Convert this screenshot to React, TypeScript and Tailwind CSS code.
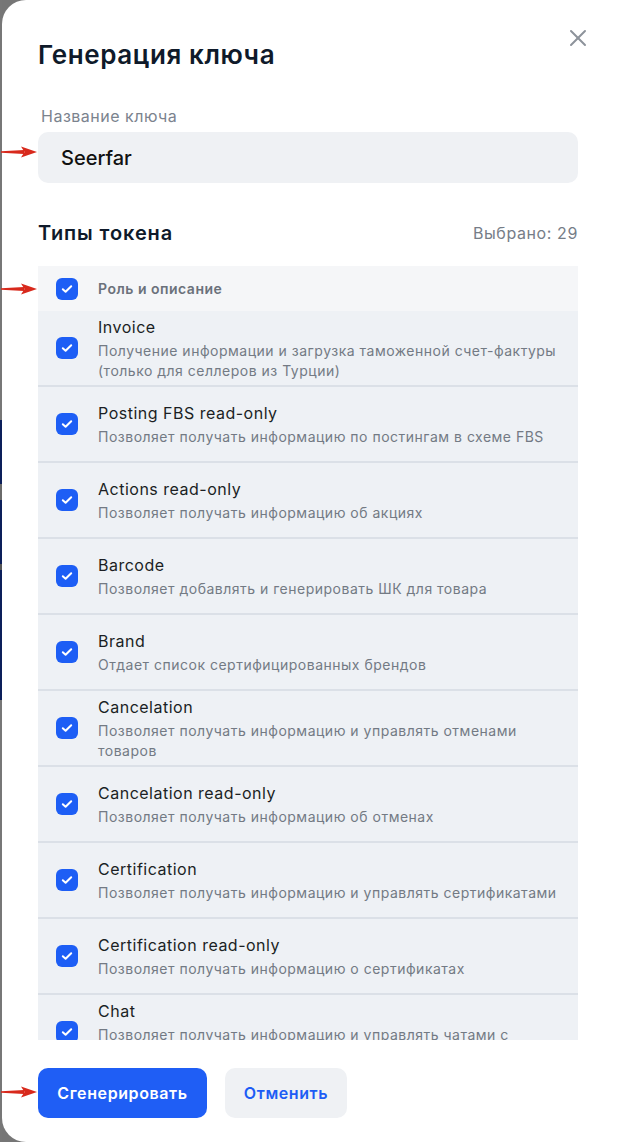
import { X } from 'lucide-react';

const tokens = [
  { title: 'Invoice', desc: 'Получение информации и загрузка таможенной счет-фактуры (только для селлеров из Турции)' },
  { title: 'Posting FBS read-only', desc: 'Позволяет получать информацию по постингам в схеме FBS' },
  { title: 'Actions read-only', desc: 'Позволяет получать информацию об акциях' },
  { title: 'Barcode', desc: 'Позволяет добавлять и генерировать ШК для товара' },
  { title: 'Brand', desc: 'Отдает список сертифицированных брендов' },
  { title: 'Cancelation', desc: 'Позволяет получать информацию и управлять отменами товаров' },
  { title: 'Cancelation read-only', desc: 'Позволяет получать информацию об отменах' },
  { title: 'Certification', desc: 'Позволяет получать информацию и управлять сертификатами' },
  { title: 'Certification read-only', desc: 'Позволяет получать информацию о сертификатах' },
  { title: 'Chat', desc: 'Позволяет получать информацию и управлять чатами с покупателями' },
];

function Check() {
  return (
    <div className="w-[22px] h-[22px] shrink-0 rounded-[6px] bg-[#1d5ef5] flex items-center justify-center">
      <svg width="12" height="10" viewBox="0 0 12 10" fill="none">
        <path d="M1.8 5.2 L4.6 7.8 L10.2 2.2" stroke="white" strokeWidth="2" strokeLinecap="round" strokeLinejoin="round" />
      </svg>
    </div>
  );
}

function Arrow({ top }: { top: number }) {
  return (
    <svg className="absolute left-[1px]" style={{ top }} width="36" height="12" viewBox="0 0 36 12">
      <polygon points="0,5.3 23,4 23,8 0,6.7" fill="#d8291c" />
      <polygon points="20,0.5 36,6 20,11.5 23.5,6" fill="#d8291c" />
    </svg>
  );
}

export default function App() {
  return (
    <div className="relative w-[620px] h-[1142px] flex bg-[#767676] overflow-hidden tracking-[0.5px]" style={{ fontFamily: 'Inter, "Noto Sans", sans-serif' }}>
      <div className="w-[2px] flex flex-col shrink-0">
        <div className="h-[420px] bg-[#777777]" />
        <div className="h-[64px] bg-[#0c1f5a]" />
        <div className="h-[16px] bg-[#6a6a6a]" />
        <div className="h-[64px] bg-[#0c1f5a]" />
        <div className="h-[6px] bg-[#555]" />
        <div className="h-[130px] bg-[#0c1f5a]" />
        <div className="flex-1 bg-[#777777]" />
      </div>

      <div className="flex-1 bg-white rounded-l-[24px] pl-[36px] pr-[42px] flex flex-col">
        <div className="flex justify-between items-start pt-[31px]">
          <h1 className="mt-[8px] text-[26px] leading-[32px] font-semibold text-[#0f1a2a] tracking-[0.6px]">Генерация ключа</h1>
          <X className="-mt-[7px] -mr-[14px] text-[#8d939b]" size={28} strokeWidth={1.7} />
        </div>

        <div className="mt-[35px] pl-[3px] text-[16px] leading-[20px] text-[#7b838e]">Название ключа</div>
        <div className="mt-[6px] h-[51px] rounded-[10px] bg-[#eff1f4] flex items-center pl-[23px] text-[20px] font-medium text-[#111] tracking-normal">
          Seerfar
        </div>

        <div className="mt-[36px] flex items-center justify-between h-[28px]">
          <h2 className="text-[20px] font-semibold text-[#0f1a2a] tracking-[0.9px]">Типы токена</h2>
          <span className="text-[16px] text-[#767d87] tracking-[0.6px]">Выбрано: 29</span>
        </div>

        <div className="mt-[19px] h-[774px] overflow-hidden">
          <div className="h-[45px] bg-[#f5f6f8] flex items-center pl-[18px] gap-[20px]">
            <Check />
            <span className="text-[14px] font-semibold text-[#6b717b]">Роль и описание</span>
          </div>
          {tokens.map((t) => (
            <div key={t.title} className="h-[76px] shrink-0 bg-[#eef1f5] border-b-2 border-[#dbe0e7] flex items-center pl-[18px] gap-[20px]">
              <Check />
              <div className="w-[472px]">
                <div className="text-[16px] leading-[22px] text-[#1b1f24]">{t.title}</div>
                <div className="mt-[3px] text-[14px] leading-[20px] text-[#737a84]">{t.desc}</div>
              </div>
            </div>
          ))}
        </div>

        <div className="mt-[28px] flex gap-[18px]">
          <button className="h-[50px] w-[169px] rounded-[10px] bg-[#1f5ef5] text-white text-[16px] font-semibold tracking-[0.6px]">Сгенерировать</button>
          <button className="h-[50px] w-[122px] rounded-[10px] bg-[#eff1f4] text-[#1d5cf5] text-[16px] font-semibold tracking-[0.6px]">Отменить</button>
        </div>
      </div>

      <Arrow top={146} />
      <Arrow top={283} />
      <Arrow top={1086} />
    </div>
  );
}
